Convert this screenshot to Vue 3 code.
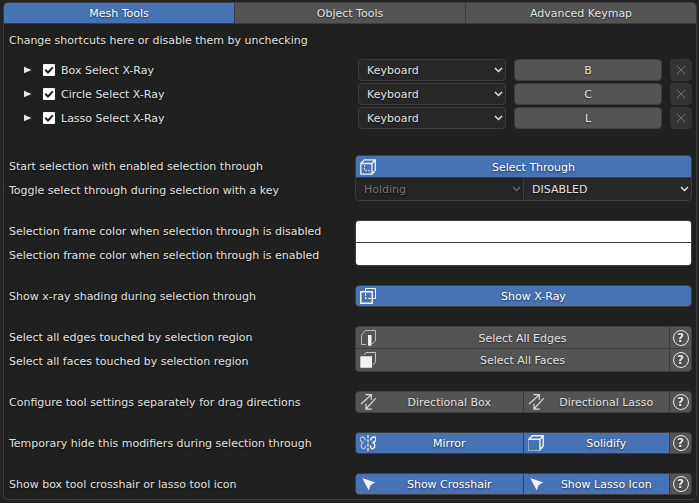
<script setup>
import { ref } from 'vue'

const tabs = ['Mesh Tools', 'Object Tools', 'Advanced Keymap']
const activeTab = ref('Mesh Tools')

const shortcuts = ref([
  { id: 'box', name: 'Box Select X-Ray', key: 'B', enabled: true, device: 'Keyboard' },
  { id: 'circle', name: 'Circle Select X-Ray', key: 'C', enabled: true, device: 'Keyboard' },
  { id: 'lasso', name: 'Lasso Select X-Ray', key: 'L', enabled: true, device: 'Keyboard' },
])

const colorDisabled = ref('#ffffff')
const colorEnabled = ref('#ffffff')

const groups = ref([
  {
    labels: ['Show x-ray shading during selection through'],
    rows: [{ toggles: [{ text: 'Show X-Ray', icon: 'xray', on: true }] }],
  },
  {
    labels: ['Select all edges touched by selection region', 'Select all faces touched by selection region'],
    rows: [
      { toggles: [{ text: 'Select All Edges', icon: 'edge', on: false }], help: true },
      { toggles: [{ text: 'Select All Faces', icon: 'face', on: false }], help: true },
    ],
  },
  {
    labels: ['Configure tool settings separately for drag directions'],
    rows: [
      {
        toggles: [
          { text: 'Directional Box', icon: 'arrows', on: false },
          { text: 'Directional Lasso', icon: 'arrows', on: false },
        ],
        help: true,
      },
    ],
  },
  {
    labels: ['Temporary hide this modifiers during selection through'],
    rows: [
      {
        toggles: [
          { text: 'Mirror', icon: 'mirror', on: true },
          { text: 'Solidify', icon: 'solidify', on: true },
        ],
        help: true,
      },
    ],
  },
  {
    labels: ['Show box tool crosshair or lasso tool icon'],
    rows: [
      {
        toggles: [
          { text: 'Show Crosshair', icon: 'cursor', on: true },
          { text: 'Show Lasso Icon', icon: 'cursor', on: true },
        ],
        help: true,
      },
    ],
  },
])

const selectThrough = ref(true)

// Each icon is a list of strokes and fills on a 16 x 16 grid.
const icons = {
  cube: [
    { d: 'M.8 4.5H12V15.2H.8ZM.8 4.5L4.3.8H15.3V11.3L12 15.2M12 4.5L15.3.8', w: 1.3 },
    { d: 'M4.5 6V11.5H11', w: 1, dash: '2 1', o: 0.8 },
  ],
  xray: [
    { d: 'M.8 3.8H12.2V15.2H.8Z', w: 1.5 },
    { d: 'M5.5 3V.5H15.5V10.5H13', w: 1 },
    { d: 'M5.5 5V10.5H11', w: 1, dash: '3 1' },
  ],
  edge: [
    { d: 'M6 14.5H1.5V5L5.5 .5H15.5V10.5L12.3 14', w: 1, o: 0.65 },
    { d: 'M8 5H11.5V15.8H8Z', fill: true },
  ],
  face: [
    { d: 'M4.5 3V2.5L6 .5H15.5V9.5L13 13', w: 1, o: 0.7 },
    { d: 'M.3 4.2H12V15.8H.3Z', fill: true },
  ],
  arrows: [
    { d: 'M1 10L11.3.7M5.5.7H11.3V5.8M15.8 4.2L6 15M6 9.8V15.2H11.8', w: 1.2, o: 0.85 },
  ],
  mirror: [
    { d: 'M5.5 5.5C4.8 3 3.5 1.8 1.8 2C-.2 2.3-.2 5 1 6.2C1.8 7 3 7.4 3.5 7.5C1.8 8 1 9 1.2 10.8C1.4 13 3 14.3 4.5 13.5C5.5 12.9 5.5 11.8 5.5 10.5', w: 1.2, o: 0.65 },
    { d: 'M10.5 5.5C11.2 3 12.5 1.8 14.2 2C16.2 2.3 16.2 5 15 6.2C14.2 7 13 7.4 12.5 7.5C14.2 8 15 9 14.8 10.8C14.6 13 13 14.3 11.5 13.5C10.5 12.9 10.5 11.8 10.5 10.5', w: 1.4 },
    { d: 'M8 0V16', w: 1.2, dash: '3 1.3' },
  ],
  solidify: [
    { d: 'M.5 5.5V15.5H11', w: 1, o: 0.45 },
    { d: 'M.8 4.3L4.3.8H15.2V11L12 14.8V4.3ZM12 4.3L15.2.8', w: 1.4 },
  ],
  cursor: [{ d: 'M2.2 2L15.3 6.6L10.6 9L8.8 14.6Z', fill: true }],
}
</script>

<template>
  <main class="panel">
    <nav class="tabs">
      <button
        v-for="tab in tabs"
        :key="tab"
        type="button"
        class="tab"
        :class="{ on: tab === activeTab }"
        @click="activeTab = tab"
      >{{ tab }}</button>
    </nav>

    <div class="content">
      <section class="keymap">
        <p class="heading">Change shortcuts here or disable them by unchecking</p>
        <div v-for="s in shortcuts" :key="s.id" class="split">
          <div class="shortcut">
            <button type="button" class="expand" :aria-label="'Expand ' + s.name">
              <svg width="8" height="8" viewBox="0 0 8 8"><path d="M0 .8L7.5 4L0 7.2Z" fill="#e6e6e6" /></svg>
            </button>
            <label class="check">
              <span class="box">
                <input v-model="s.enabled" type="checkbox" />
                <svg v-if="s.enabled" width="12" height="12" viewBox="0 0 12 12"><path d="M2.3 5.8L5 8.5L9.8 3.4" /></svg>
              </span>
              <span class="name">{{ s.name }}</span>
            </label>
          </div>
          <div class="binding">
            <span class="dropdown framed">
              <select v-model="s.device" :aria-label="s.name + ' device'">
                <option>Keyboard</option>
                <option>Mouse</option>
              </select>
              <svg class="caret" width="9" height="6" viewBox="0 0 9 6"><path d="M1 1L4.5 4.5L8 1" /></svg>
            </span>
            <button type="button" class="key">{{ s.key }}</button>
            <button type="button" class="remove" disabled :aria-label="'Remove ' + s.name">
              <svg width="10" height="10" viewBox="0 0 10 10"><path d="M.7.7L9.3 9.3M9.3.7L.7 9.3" /></svg>
            </button>
          </div>
        </div>
      </section>

      <section class="split">
        <div class="labels">
          <span>Start selection with enabled selection through</span>
          <label for="toggle-key">Toggle select through during selection with a key</label>
        </div>
        <div class="stack">
          <div class="row">
            <button type="button" class="toggle" :class="{ on: selectThrough }" @click="selectThrough = !selectThrough">
              <svg class="icon" viewBox="0 0 16 16">
                <path
                  v-for="(p, i) in icons.cube"
                  :key="i"
                  :d="p.d"
                  :stroke-width="p.w"
                  :stroke-dasharray="p.dash"
                  :opacity="p.o"
                />
              </svg>
              <span>Select Through</span>
            </button>
          </div>
          <div class="row">
            <span class="dropdown cell">
              <select disabled aria-label="Toggle type"><option>Holding</option></select>
              <svg class="caret" width="9" height="6" viewBox="0 0 9 6"><path d="M1 1L4.5 4.5L8 1" /></svg>
            </span>
            <span class="dropdown cell">
              <select id="toggle-key"><option>DISABLED</option></select>
              <svg class="caret" width="9" height="6" viewBox="0 0 9 6"><path d="M1 1L4.5 4.5L8 1" /></svg>
            </span>
          </div>
        </div>
      </section>

      <section class="split">
        <div class="labels">
          <label for="color-disabled">Selection frame color when selection through is disabled</label>
          <label for="color-enabled">Selection frame color when selection through is enabled</label>
        </div>
        <div class="stack">
          <div class="row"><input id="color-disabled" v-model="colorDisabled" type="color" /></div>
          <div class="row"><input id="color-enabled" v-model="colorEnabled" type="color" /></div>
        </div>
      </section>

      <section v-for="(g, gi) in groups" :key="gi" class="split">
        <div class="labels">
          <span v-for="l in g.labels" :key="l">{{ l }}</span>
        </div>
        <div class="stack">
          <div v-for="(r, ri) in g.rows" :key="ri" class="row" :class="{ halves: r.toggles.length === 2 }">
            <button
              v-for="t in r.toggles"
              :key="t.text"
              type="button"
              class="toggle"
              :class="{ on: t.on }"
              @click="t.on = !t.on"
            >
              <svg class="icon" viewBox="0 0 16 16">
                <path
                  v-for="(p, i) in icons[t.icon]"
                  :key="i"
                  :d="p.d"
                  :class="{ solid: p.fill }"
                  :stroke-width="p.w"
                  :stroke-dasharray="p.dash"
                  :opacity="p.o"
                />
              </svg>
              <span>{{ t.text }}</span>
            </button>
            <button v-if="r.help" type="button" class="help"><span>?</span></button>
          </div>
        </div>
      </section>
    </div>
  </main>
</template>

<style>
body {
  background: #232323;
}
</style>

<style scoped>
.panel,
.panel * {
  box-sizing: border-box;
}
.panel {
  margin: 2px 2px 3px 3px;
  border: 1px solid #3d3d3d;
  border-radius: 5px;
  background: #202020;
  overflow: hidden;
  color: #e0e0e0;
  font: 11px/18px "DejaVu Sans", sans-serif;
  text-shadow: 0 1px 2px rgba(0, 0, 0, 0.6);
}
button,
select,
input {
  margin: 0;
  padding: 0;
  border: 0;
  font: inherit;
  color: inherit;
  text-shadow: inherit;
  background: none;
}
svg {
  display: block;
  flex: none;
}
.tabs {
  display: grid;
  grid-template-columns: minmax(0, 1fr) minmax(0, 1fr) minmax(0, 1fr);
  gap: 1px;
  border-bottom: 1px solid #3d3d3d;
  background: #3d3d3d;
}
.tab {
  height: 20px;
  background: #545454;
}
.tab,
.key,
.dropdown select {
  padding-top: 1px;
}
.name,
.toggle span {
  padding-top: 2px;
}
.tab.on {
  background: #4772b3;
  color: #fff;
}
.content {
  display: flex;
  flex-direction: column;
  gap: 19px;
  padding: 5px 4px 4px 5px;
}
.keymap {
  display: grid;
  gap: 2px;
  margin-bottom: 7px;
}
.heading {
  height: 22px;
  margin: 0 0 6px;
  line-height: 24px;
}
.split {
  display: grid;
  grid-template-columns: minmax(0, 1fr) minmax(0, 1fr);
  column-gap: 9px;
}
.labels {
  display: grid;
  grid-auto-rows: 22px;
  align-content: start;
  gap: 2px;
  line-height: 24px;
  white-space: nowrap;
}
.shortcut {
  display: flex;
  align-items: center;
  gap: 11px;
  padding-left: 15px;
}
.check {
  display: flex;
  align-items: center;
  gap: 6px;
}
.box {
  display: grid;
}
.box input {
  appearance: none;
  width: 12px;
  height: 12px;
  border-radius: 1px;
  background: #545454;
}
.box input:checked {
  background: #fff;
}
.box input,
.box svg {
  grid-area: 1 / 1;
}
.box svg {
  pointer-events: none;
}
.box path {
  fill: none;
  stroke: #202020;
  stroke-width: 2;
}
.binding {
  display: grid;
  grid-template-columns: 1fr 1fr 22px;
  grid-template-rows: 22px;
  gap: 8px;
  padding-left: 3px;
}
.dropdown {
  display: grid;
  align-items: center;
  background: #282828;
}
.framed {
  border: 1px solid #3d3d3d;
  border-radius: 4px;
}
.dropdown select {
  appearance: none;
  grid-area: 1 / 1;
  width: 100%;
  height: 20px;
  padding-left: 8px;
}
.dropdown option {
  background: #282828;
}
.caret {
  grid-area: 1 / 1;
  justify-self: end;
  margin-right: 2px;
  pointer-events: none;
}
.caret path {
  fill: none;
  stroke: #e6e6e6;
  stroke-width: 1.4;
}
select:disabled {
  color: #747474;
  opacity: 1;
}
select:disabled + .caret {
  opacity: 0.35;
}
.cell:has(select:disabled) {
  background: #242424;
}
.key {
  border: 1px solid #3d3d3d;
  border-radius: 4px;
  background: #545454;
}
.remove {
  display: grid;
  place-items: center;
  border: 1px solid #363636;
  border-radius: 4px;
  background: #333333;
}
.remove path {
  stroke: #747474;
  stroke-width: 1;
}
.stack {
  display: grid;
  align-content: start;
  gap: 1px;
  border: 1px solid #3d3d3d;
  border-radius: 4px;
  background: #3d3d3d;
  overflow: hidden;
}
.row {
  display: grid;
  grid-auto-flow: column;
  grid-auto-columns: minmax(0, 1fr);
  grid-template-rows: minmax(0, 1fr);
  gap: 1px;
  height: 20px;
}
.row:not(:only-child) {
  height: 21px;
}
.row + .row:not(:only-child) {
  height: 22px;
}
.row:has(.help) {
  grid-template-columns: 1fr 21px;
}
.row.halves {
  grid-template-columns: calc(50% - 1px) 1fr 21px;
}
.toggle {
  display: flex;
  align-items: center;
  padding-left: 4px;
  background: #545454;
}
.toggle span {
  flex: 1;
  text-align: center;
  white-space: nowrap;
}
.toggle.on {
  background: #4772b3;
  color: #fff;
}
.icon {
  width: 16px;
  height: 16px;
}
.icon path {
  fill: none;
  stroke: #f2f2f2;
}
.icon .solid {
  fill: #f2f2f2;
  stroke: none;
}
.help {
  display: grid;
  place-items: center;
  background: #545454;
}
.help span {
  width: 16px;
  height: 16px;
  border: 1px solid #e6e6e6;
  border-radius: 50%;
  color: #e6e6e6;
  font-size: 12px;
  font-weight: bold;
  line-height: 14px;
}
input[type="color"] {
  appearance: none;
  width: 100%;
  height: 100%;
}
input[type="color"]::-webkit-color-swatch-wrapper {
  padding: 0;
}
input[type="color"]::-webkit-color-swatch {
  border: 0;
}
</style>
